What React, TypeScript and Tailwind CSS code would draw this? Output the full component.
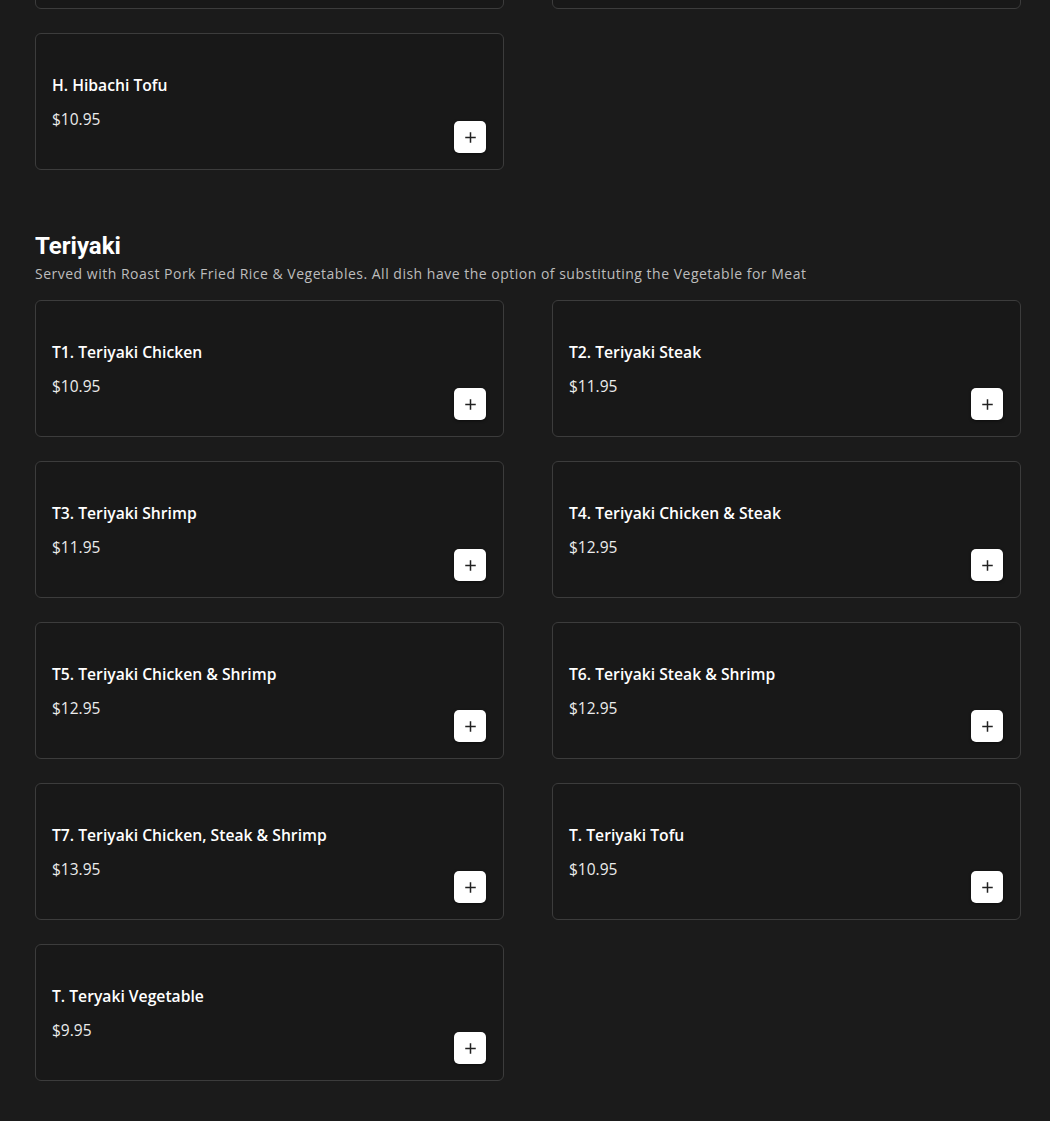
import React from "react";

type Item = { name: string; price: string };

const prevTop: Item[] = [
  { name: "H. Hibachi A", price: "$0" },
  { name: "H. Hibachi B", price: "$0" },
  { name: "H. Hibachi Tofu", price: "$10.95" },
];

const teriyaki: Item[] = [
  { name: "T1. Teriyaki Chicken", price: "$10.95" },
  { name: "T2. Teriyaki Steak", price: "$11.95" },
  { name: "T3. Teriyaki Shrimp", price: "$11.95" },
  { name: "T4. Teriyaki Chicken & Steak", price: "$12.95" },
  { name: "T5. Teriyaki Chicken & Shrimp", price: "$12.95" },
  { name: "T6. Teriyaki Steak & Shrimp", price: "$12.95" },
  { name: "T7. Teriyaki Chicken, Steak & Shrimp", price: "$13.95" },
  { name: "T. Teriyaki Tofu", price: "$10.95" },
  { name: "T. Teryaki Vegetable", price: "$9.95" },
];

const font = { fontFamily: '"Open Sans", "Liberation Sans", sans-serif' };

function Card({ item }: { item: Item }) {
  return (
    <div className="relative flex h-[137px] items-center rounded-md border border-[#3c3c3c] bg-[#181818] px-[16px]">
      <div className="flex flex-col pt-[1px]">
        <div className="text-[15.7px] font-semibold leading-6 text-white" style={font}>
          {item.name}
        </div>
        <div className="mt-[10px] text-[15.5px] leading-6 text-[#ececec]" style={font}>
          {item.price}
        </div>
      </div>
      <button className="absolute bottom-[16px] right-[17px] flex h-[32px] w-[32px] items-center justify-center rounded-[5px] bg-white shadow-[0_1px_3px_rgba(0,0,0,0.5)]">
        <svg width="11" height="11" viewBox="0 0 11 11" fill="none">
          <path d="M5.5 1v9M1 5.5h9" stroke="#222" strokeWidth="1.5" strokeLinecap="square" />
        </svg>
      </button>
    </div>
  );
}

export default function App() {
  return (
    <div className="min-h-[1121px] overflow-hidden bg-[#1b1b1b]">
      <div className="ml-[35px] w-[986px]">
        <div className="-mt-[128px] grid grid-cols-2 gap-x-[48px] gap-y-[24px]">
          {prevTop.map((it, i) => (
            <div key={i}>
              {i < 2 ? (
                <div className="h-[137px] rounded-md border border-[#3c3c3c] bg-[#181818]" />
              ) : (
                <Card item={it} />
              )}
            </div>
          ))}
        </div>
        <div className="mt-[61px]">
          <h2
            className="text-[24px] font-bold leading-[30px] text-white"
            style={{ fontFamily: 'Roboto, "Liberation Sans", sans-serif' }}
          >
            Teriyaki
          </h2>
          <p className="mt-[3px] text-[14px] leading-[20px] tracking-[0.5px] text-[#bdbdbd]" style={font}>
            Served with Roast Pork Fried Rice &amp; Vegetables. All dish have the option of substituting the Vegetable for Meat
          </p>
        </div>
        <div className="mt-[16px] grid grid-cols-2 gap-x-[48px] gap-y-[24px] pb-[40px]">
          {teriyaki.map((it, i) => (
            <Card key={i} item={it} />
          ))}
        </div>
      </div>
    </div>
  );
}
